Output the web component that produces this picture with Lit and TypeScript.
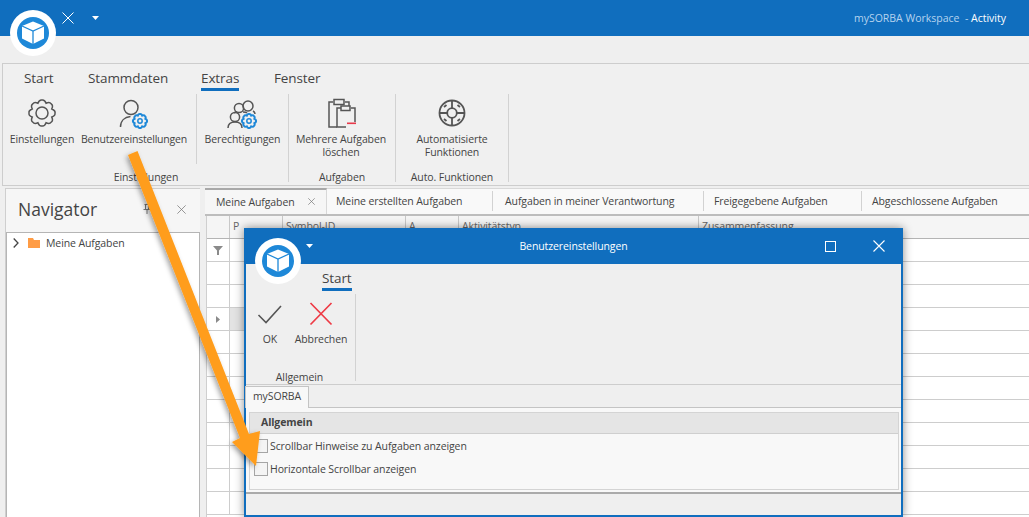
import { LitElement, html, css, svg } from 'lit';
import { customElement } from 'lit/decorators.js';

// builds a cog outline with rounded teeth
function cogPath(cx: number, cy: number, outer: number, inner: number, teeth: number) {
  const pts: string[] = [];
  const step = (Math.PI * 2) / teeth;
  const pt = (a: number, r: number) =>
    `${(cx + Math.cos(a) * r).toFixed(2)} ${(cy + Math.sin(a) * r).toFixed(2)}`;
  pts.push(`M${pt(-step / 2, inner)}`);
  for (let i = 0; i < teeth; i++) {
    const a = i * step;
    pts.push(`Q${pt(a - step / 4, outer * 1.06)} ${pt(a, outer)}`);
    pts.push(`Q${pt(a + step / 4, outer * 1.06)} ${pt(a + step / 2, inner)}`);
  }
  return pts.join(' ') + 'Z';
}

const GREY = '#555';
const BLUE = '#1e88d8';

const blueCog = (cx: number, cy: number) => svg`
  <path d=${cogPath(cx, cy, 7, 5.8, 8)} fill="none" stroke=${BLUE} stroke-width="2"></path>
  <circle cx=${cx} cy=${cy} r="2.2" fill="none" stroke=${BLUE} stroke-width="1.5"></circle>`;

const iconGear = html`<svg class="ico" viewBox="0 0 32 32">
  <path d=${cogPath(16, 16, 13, 10.6, 8)} fill="none" stroke=${GREY} stroke-width="1.5"></path>
  <circle cx="16" cy="16" r="6" fill="none" stroke=${GREY} stroke-width="1.5"></circle>
</svg>`;

const iconUser = html`<svg class="ico" viewBox="2 0 32 32">
  <circle cx="15" cy="10.5" r="7" fill="none" stroke=${GREY} stroke-width="1.5"></circle>
  <path d="M4.5 30c0-6 4-10 10-10.500" fill="none" stroke=${GREY} stroke-width="1.5"></path>
  ${blueCog(24, 24)}
</svg>`;

const iconUsers = html`<svg class="ico" viewBox="0 0 32 32">
  <circle cx="22" cy="9" r="5" fill="none" stroke=${GREY} stroke-width="1.5"></circle>
  <circle cx="13" cy="11" r="4.600" fill="none" stroke=${GREY} stroke-width="1.500"></circle>
  <circle cx="9" cy="20" r="4.600" fill="none" stroke=${GREY} stroke-width="1.500"></circle>
  <path d="M2 31c0-4 3-6 7-6s7 2 7 6M8 16c1-1 2-1 3-1M17 15c2 0 3 0 4 1M27 14c1 .5 2 2 2 3" fill="none" stroke=${GREY} stroke-width="1.500"></path>
  ${blueCog(23, 24)}
</svg>`;

const iconClipboards = html`<svg class="ico" viewBox="0 0 32 32">
  <path d="M8 5H4v25h8M20 5h4v4" fill="none" stroke=${GREY} stroke-width="1.500"></path>
  <rect x="9" y="2.500" width="10" height="5" fill="none" stroke=${GREY} stroke-width="1.500"></rect>
  <path d="M16 11h-4v19h9M26 11h4v14" fill="none" stroke=${GREY} stroke-width="1.500"></path>
  <rect x="16" y="9" width="9" height="4.500" fill="none" stroke=${GREY} stroke-width="1.500"></rect>
  <rect x="22" y="25.500" width="9" height="1.600" fill="#e8394a"></rect>
</svg>`;

const iconAuto = html`<svg class="ico" viewBox="0 0 32 32">
  <circle cx="16" cy="16" r="12.500" fill="none" stroke=${GREY} stroke-width="1.800"></circle>
  <circle cx="16" cy="16" r="4.800" fill="none" stroke=${GREY} stroke-width="1.800"></circle>
  <path d="M16 3.500v7.700M16 20.800v7.700M3.500 16h7.700M20.800 16h7.700" stroke=${GREY} stroke-width="1.800"></path>
  <path d="M8 10l2.500-2M24 10l-2.500-2M8 22l2.500 2M24 22l-2.500 2" stroke=${GREY} stroke-width="1.800"></path>
</svg>`;

const iconCheck = html`<svg class="ico" viewBox="0 0 32 32">
  <path d="M4.500 17l7.500 7.500L27 8" fill="none" stroke=${GREY} stroke-width="1.600"></path>
</svg>`;

const iconCross = html`<svg class="ico" viewBox="0 0 32 32">
  <path d="M5.500 5l21 21.500M26.500 5l-21 21.500" fill="none" stroke="#ee3a45" stroke-width="1.700"></path>
</svg>`;

const logo = html`<svg viewBox="0 0 46 46" width="46" height="46">
  <circle cx="23" cy="23" r="23" fill="#fff"></circle>
  <circle cx="23" cy="23" r="16" fill=${BLUE}></circle>
  <path d="M23 11.500l11 4.500v12.500l-11 5.500-11-5.500V16z" fill="#fff"></path>
  <path d="M12 16l11 5 11-5M23 21v13" fill="none" stroke=${BLUE} stroke-width="1.300"></path>
</svg>`;

const caret = html`<svg class="caret" viewBox="0 0 7 4" width="7" height="4"><path d="M0 0h7L3.500 4z" fill="#fff"></path></svg>`;

const closeX = (size: number, colour: string, width = 1.200) => html`<svg viewBox="0 0 12 12" width=${size} height=${size}>
  <path d="M.5 .5l11 11M11.500 .5l-11 11" fill="none" stroke=${colour} stroke-width=${width}></path>
</svg>`;

@customElement('app-root')
export class AppRoot extends LitElement {
  static styles = css`
    :host {
      display: block;
      position: relative;
      width: 1029px;
      height: 517px;
      overflow: hidden;
      background: #efefef;
      color: #444;
      font-family: "Open Sans", "Noto Sans", sans-serif;
      font-size: 10.5px;
      letter-spacing: -0.1px;
    }
    .ico { width: 32px; height: 32px; display: block; }
    .titlebar {
      height: 36px;
      background: #106ebe;
      display: flex;
      align-items: center;
      padding-left: 62px;
      padding-right: 23px;
    }
    .titlebar .caret { margin-left: 18px; }
    .apptitle { margin-left: auto; color: #b5d3ee; font-size: 10.5px; letter-spacing: 0; }
    .apptitle b { font-weight: 400; color: #fff; }
    .logo { position: absolute; left: 10px; top: 10px; width: 46px; height: 46px; }

    .ribbon {
      margin: 27px 0 0 2px;
      height: 123px;
      box-sizing: border-box;
      border: 1px solid #cdcdcd;
      border-right: none;
      background: #f0f0f0;
    }
    .rtabs { display: flex; height: 30px; align-items: flex-start; }
    .rtab { position: absolute; top: 69px; font-size: 13.5px; line-height: 18px; color: #444; }
    .rtab.on::after, .dtab::after {
      content: '';
      display: block;
      height: 3px;
      margin-top: 1px;
      background: #106ebe;
    }
    .groups { display: flex; height: 91px; }
    .group {
      position: relative;
      box-sizing: border-box;
      height: 88px;
      border-right: 1px solid #d2d2d2;
      display: flex;
      flex-direction: column;
    }
    .g1 { width: 194px; border-right: none; }
    .g1::after {
      content: '';
      position: absolute;
      right: 0;
      top: 0;
      height: 70px;
      width: 1px;
      background: #d2d2d2;
    }
    .g2 { width: 92px; }
    .g3 { width: 107px; }
    .g3 .btns { padding-right: 2px; }
    .g4 { width: 113px; }
    .btns { display: flex; flex: 1; justify-content: center; padding-top: 3px; }
    .g1 .btns { justify-content: flex-start; }
    .btn { display: flex; flex-direction: column; align-items: center; text-align: center; line-height: 13px; }
    .btn .ico { margin-bottom: 4px; }
    .btn span { display: block; white-space: nowrap; }
    .b-a { width: 78px; }
    .b-b { width: 106px; margin-left: -2px; padding-left: 2px; letter-spacing: -0.2px; }
    .glabel { height: 15px; line-height: 15px; text-align: center; white-space: nowrap; margin-bottom: -3px; }
    .g1 .glabel { padding-left: 92px; padding-right: 0; }

    .main { display: flex; height: 331px; padding-top: 2px; box-sizing: border-box; }
    .nav {
      margin-left: 5px;
      width: 195px;
      height: 329px;
      border: 1px solid #cfcfcf;
      border-bottom: none;
      border-right: none;
      box-sizing: border-box;
      background: #f6f6f6;
      display: flex;
      flex-direction: column;
    }
    .navhead { height: 43px; box-sizing: border-box; display: flex; align-items: center; padding: 0 14px 3px 12px; flex: none; }
    .navhead h2 { margin: 0; font-size: 17.5px; font-weight: 400; color: #444; flex: 1; letter-spacing: 0; }
    .navhead .pin { margin-right: 26px; }
    .tree {
      flex: 1;
      background: #fff;
      border: 1px solid #b5b5b5;
      border-bottom: none;
      display: flex;
      align-items: flex-start;
      padding: 3px 0 0 6px;
    }
    .treerow { display: flex; align-items: center; height: 14px; }
    .treerow .chev { margin-right: 9px; }
    .treerow .folder { margin-right: 6px; }

    .content { margin-left: 5px; flex: 1; display: flex; flex-direction: column; min-width: 0; }
    .tabs {
      height: 28px;
      box-sizing: border-box;
      display: grid;
      grid-template-columns: 122px 165px 211px 158px 1fr;
      background: #f9f9f9;
      border-top: 1px solid #d8d8d8;
      border-bottom: 2px solid #bdbdbd;
      flex: none;
    }
    .tab { display: flex; align-items: center; padding: 0 0 1px 11px; position: relative; white-space: nowrap; }
    .tab::before {
      content: '';
      position: absolute;
      left: 0;
      top: 2px;
      height: 20px;
      width: 1px;
      background: #d2d2d2;
    }
    .tab.nosep { padding-left: 9px; }
    .tab.nosep::before { display: none; }
    .tab.third { padding-left: 13px; }
    .tab.on {
      padding-left: 11px;
      margin-top: -1px;
      border-top: 2px solid #a8a8a8;
      border-right: 1px solid #d8d8d8;
      background: #f6f6f6;
      justify-content: space-between;
      padding-right: 11px;
    }
    .tab.on::before { display: none; }
    .grid { flex: 1; margin-left: 1px; background: #fff; border-left: 1px solid #cfcfcf; }
    .ghead {
      height: 23px;
      box-sizing: border-box;
      display: grid;
      grid-template-columns: 22px 53px 123px 53px 240px 1fr;
      background: #f5f5f5;
      border-bottom: 1px solid #b4b4b4;
      line-height: 20px;
      color: #666;
    }
    .ghead div { padding-left: 3px; border-left: 1px solid #c8c8c8; white-space: nowrap; }
    .ghead div:first-child { border-left: none; }
    .row {
      height: 23px;
      box-sizing: border-box;
      border-bottom: 1px solid #cdcdcd;
      display: grid;
      grid-template-columns: 23px 53px 1fr;
    }
    .row .sel { display: flex; align-items: center; justify-content: center; border-right: 1px solid #cdcdcd; }
    .row.on .data { background: #e3e3e3; }

    .dialog {
      position: absolute;
      left: 244px;
      top: 228px;
      width: 659px;
      height: 289px;
      box-sizing: border-box;
      background: #efefef;
      border: 2px solid #106ebe;
      border-top: none;
      box-shadow: 0 0 9px rgba(0, 0, 0, 0.45);
      display: flex;
      flex-direction: column;
    }
    .dtitle {
      height: 36px;
      background: #106ebe;
      color: #fff;
      display: grid;
      grid-template-columns: 1fr auto 1fr;
      align-items: center;
      flex: none;
      margin: 0 -2px;
      font-size: 10.5px;
    }
    .dtitle .left { padding-left: 62px; display: flex; align-items: center; }
    .dtitle .right { display: flex; justify-content: flex-end; align-items: center; gap: 37px; padding-right: 18px; }
    .maxbox { width: 9px; height: 9px; border: 1.5px solid #fff; }
    .dlogo { position: absolute; left: 9px; top: 10px; width: 46px; height: 46px; }
    .dtabs { height: 30px; padding-left: 76px; flex: none; }
    .dtab { display: inline-block; font-size: 13.5px; line-height: 18px; margin-top: 5px; }
    .dribbon { height: 91px; flex: none; display: flex; border-bottom: 1px solid #cdcdcd; box-sizing: border-box; }
    .dgroup {
      width: 110px;
      height: 87px;
      box-sizing: border-box;
      border-right: 1px solid #d2d2d2;
      display: flex;
      flex-direction: column;
    }
    .dgroup .glabel { padding-right: 2px; margin-bottom: -4px; }
    .dbtns { display: flex; flex: 1; padding-top: 4px; }
    .dbtns .btn .ico { margin-bottom: 3px; }
    .dbtns .btn:first-child { width: 48px; }
    .dbtns .btn:last-child { width: 54px; }
    .dpage { flex: 1; display: flex; flex-direction: column; background: #efefef; }
    .dpage .pagetab {
      box-sizing: border-box;
      width: 64px;
      height: 22px;
      margin-top: 1px;
      line-height: 19px;
      text-align: center;
      background: #f8f8f8;
      border: 1px solid #c4c4c4;
      border-bottom: none;
      color: #444;
      margin-bottom: -1px;
      position: relative;
      margin-left: -1px;
      z-index: 1;
    }
    .pagebody {
      height: 87px;
      box-sizing: border-box;
      background: #f8f8f8;
      border-top: 1px solid #c4c4c4;
      border-bottom: 2px solid #aaa;
      padding: 4px 2px 2px 3px;
      flex: none;
    }
    .gbox {
      height: 100%;
      box-sizing: border-box;
      border: 1px solid #d4d4d4;
    }
    .gboxhead {
      height: 20px;
      line-height: 19px;
      background: #e5e5e5;
      border-bottom: 1px solid #cfcfcf;
      font-weight: 700;
      padding-left: 11px;
      color: #444;
    }
    .check { display: flex; align-items: center; height: 23px; padding-left: 4px; }
    .check i {
      display: block;
      width: 12px;
      height: 12px;
      border: 1px solid #a5a5a5;
      background: #f4f4f4;
      margin-right: 2px;
      flex: none;
    }
    .dfoot { flex: 1; background: #efefef; }
    .arrow { position: absolute; left: 0; top: 0; width: 1029px; height: 517px; pointer-events: none; }
  `;

  private _rows() {
    const rows = [];
    for (let i = 0; i < 12; i++) {
      rows.push(html`<div class="row ${i === 3 ? 'on' : ''}">
        <div class="sel">
          ${i === 0
            ? html`<svg width="10" height="9" viewBox="0 0 10 9"><path d="M0 0h10L6 4.500V9H4V4.500z" fill="#8a8a8a"></path></svg>`
            : i === 3
            ? html`<svg width="4" height="7" viewBox="0 0 4 7"><path d="M0 0l4 3.500L0 7z" fill="#8a8a8a"></path></svg>`
            : ''}
        </div>
        <div class="data"></div>
        <div></div>
      </div>`);
    }
    return rows;
  }

  render() {
    return html`
      <div class="titlebar">
        ${closeX(12, '#fff', 1)}
        ${caret}
        <div class="apptitle">mySORBA Workspace&nbsp; - <b>Activity</b></div>
      </div>

      <div class="ribbon">
        <div class="rtabs"></div>
        <div class="groups">
          <div class="group g1">
            <div class="btns">
              <div class="btn b-a">${iconGear}<span>Einstellungen</span></div>
              <div class="btn b-b">${iconUser}<span>Benutzereinstellungen</span></div>
            </div>
            <div class="glabel">Einstellungen</div>
          </div>
          <div class="group g2">
            <div class="btns"><div class="btn">${iconUsers}<span>Berechtigungen</span></div></div>
          </div>
          <div class="group g3">
            <div class="btns"><div class="btn">${iconClipboards}<span>Mehrere Aufgaben<br />löschen</span></div></div>
            <div class="glabel">Aufgaben</div>
          </div>
          <div class="group g4">
            <div class="btns"><div class="btn">${iconAuto}<span>Automatisierte<br />Funktionen</span></div></div>
            <div class="glabel">Auto. Funktionen</div>
          </div>
        </div>
      </div>
      <div class="rtab" style="left:24px">Start</div>
      <div class="rtab" style="left:88px">Stammdaten</div>
      <div class="rtab on" style="left:201px">Extras</div>
      <div class="rtab" style="left:274px">Fenster</div>

      <div class="main">
        <div class="nav">
          <div class="navhead">
            <h2>Navigator</h2>
            <svg class="pin" width="8" height="10" viewBox="0 0 8 10">
              <path d="M1.500 .5h5M2.500 .5v4.500M5.500 .5v4.500M.5 5.500h7M4 5.500V10" fill="none" stroke="#777" stroke-width="1"></path>
            </svg>
            ${closeX(9, '#777', 1)}
          </div>
          <div class="tree">
            <div class="treerow">
              <svg class="chev" width="6" height="10" viewBox="0 0 6 10"><path d="M.7 .5L5 5 .7 9.500" fill="none" stroke="#444" stroke-width="1.300"></path></svg>
              <svg class="folder" width="12" height="10" viewBox="0 0 12 10"><path d="M0 0h5l1 2h6v8H0z" fill="#ff9c45"></path></svg>
              <span>Meine Aufgaben</span>
            </div>
          </div>
        </div>
        <div class="content">
          <div class="tabs">
            <div class="tab on"><span>Meine Aufgaben</span>${closeX(7, '#777', 1.200)}</div>
            <div class="tab nosep"><span>Meine erstellten Aufgaben</span></div>
            <div class="tab third"><span>Aufgaben in meiner Verantwortung</span></div>
            <div class="tab"><span>Freigegebene Aufgaben</span></div>
            <div class="tab"><span>Abgeschlossene Aufgaben</span></div>
          </div>
          <div class="grid">
            <div class="ghead">
              <div></div><div>P</div><div>Symbol-ID</div><div>A</div><div>Aktivitätstyp</div><div>Zusammenfassung</div>
            </div>
            ${this._rows()}
          </div>
        </div>
      </div>

      <div class="dialog">
        <div class="dtitle">
          <div class="left">${caret}</div>
          <div>Benutzereinstellungen</div>
          <div class="right"><div class="maxbox"></div>${closeX(12, '#fff', 1.100)}</div>
        </div>
        <div class="dlogo">${logo}</div>
        <div class="dtabs"><div class="dtab">Start</div></div>
        <div class="dribbon">
          <div class="dgroup">
            <div class="dbtns">
              <div class="btn">${iconCheck}<span>OK</span></div>
              <div class="btn">${iconCross}<span>Abbrechen</span></div>
            </div>
            <div class="glabel">Allgemein</div>
          </div>
        </div>
        <div class="dpage">
          <div class="pagetab">mySORBA</div>
          <div class="pagebody">
            <div class="gbox">
              <div class="gboxhead">Allgemein</div>
              <div class="check"><i></i><span>Scrollbar Hinweise zu Aufgaben anzeigen</span></div>
              <div class="check"><i></i><span>Horizontale Scrollbar anzeigen</span></div>
            </div>
          </div>
          <div class="dfoot"></div>
        </div>
      </div>

      <div class="logo">${logo}</div>

      <svg class="arrow" viewBox="0 0 1029 517">
        <defs>
          <filter id="sh" x="-20%" y="-20%" width="140%" height="140%">
            <feDropShadow dx="-2" dy="2" stdDeviation="2.500" flood-color="#000" flood-opacity="0.35"></feDropShadow>
          </filter>
        </defs>
        <path d="M128 155L137.500 151L249 434L260 431L256 466L232 442L240 438z" fill="#ff9d1c" filter="url(#sh)"></path>
      </svg>
    `;
  }
}
